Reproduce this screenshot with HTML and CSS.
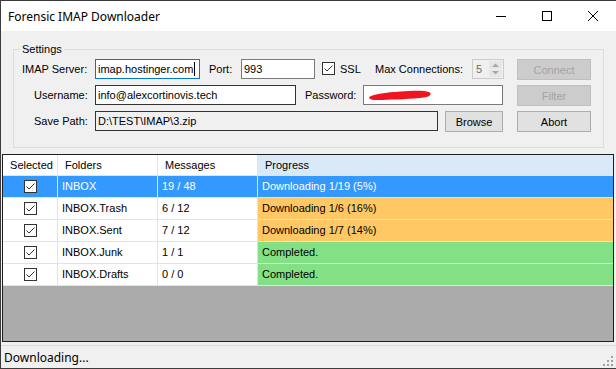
FILE: index.html
```html
<!DOCTYPE html>
<html lang="en">
  <head>
    <meta charset="UTF-8" />
    <title>Forensic IMAP Downloader</title>
    <link rel="stylesheet" href="styles.css">
  </head>
  <body>
    <div class="window">
      <div class="titlebar">
        <span class="title">Forensic IMAP Downloader</span>
        <div class="caption-buttons">
          <span class="cap">
            <svg width="10" height="10" viewBox="0 0 10 10"><path d="M0 5.5H10" stroke="#000" stroke-width="1"/></svg>
          </span>
          <span class="cap">
            <svg width="10" height="10" viewBox="0 0 10 10"><rect x="0.5" y="0.5" width="9" height="9" fill="none" stroke="#000" stroke-width="1"/></svg>
          </span>
          <span class="cap">
            <svg width="10" height="10" viewBox="0 0 10 10"><path d="M0 0L10 10M10 0L0 10" stroke="#000" stroke-width="1"/></svg>
          </span>
        </div>
      </div>

      <div class="main">
        <fieldset class="settings">
          <legend>Settings</legend>
          <div class="row">
            <label class="lbl lbl-server">IMAP Server:</label>
            <div class="textbox tb-server focused">imap.hostinger.com<span class="caret"></span></div>
            <label class="lbl lbl-port">Port:</label>
            <div class="textbox tb-port">993</div>
            <span class="checkbox cb-ssl">
              <svg width="11" height="11" viewBox="0 0 11 11"><path d="M1.5 5.5L4 8L9.5 2.5" fill="none" stroke="#333" stroke-width="1"/></svg>
            </span>
            <label class="lbl lbl-ssl">SSL</label>
            <label class="lbl lbl-max">Max Connections:</label>
            <div class="numeric">
              <span class="num-value">5</span>
              <span class="spin">
                <span class="spin-btn"><svg width="7" height="4" viewBox="0 0 7 4"><path d="M0 4L3.5 0.5L7 4Z" fill="#a8a8a8"/></svg></span>
                <span class="spin-btn"><svg width="7" height="4" viewBox="0 0 7 4"><path d="M0 0L3.5 3.5L7 0Z" fill="#a8a8a8"/></svg></span>
              </span>
            </div>
            <button class="btn btn-side" disabled>Connect</button>
          </div>
          <div class="row">
            <label class="lbl lbl-indent">Username:</label>
            <div class="textbox tb-user dark">info@alexcortinovis.tech</div>
            <label class="lbl lbl-pass">Password:</label>
            <div class="textbox tb-pass">
              <svg class="scribble" width="64" height="12" viewBox="0 0 64 12">
                <path d="M1 8C6 5 18 3.5 32 2.5C44 1.5 56 1 61 3C64 4.5 63 7.5 56 8.5C44 10 26 10.5 14 11C6 11.3 1 11 1 8Z" fill="#f0141e"/>
              </svg>
            </div>
            <button class="btn btn-side" disabled>Filter</button>
          </div>
          <div class="row">
            <label class="lbl lbl-indent">Save Path:</label>
            <div class="textbox tb-path dark readonly">D:\TEST\IMAP\3.zip</div>
            <button class="btn btn-browse">Browse</button>
            <button class="btn btn-side">Abort</button>
          </div>
        </fieldset>

        <div class="grid">
          <div class="grid-row grid-head">
            <div class="cell col-sel">Selected</div>
            <div class="cell col-folder">Folders</div>
            <div class="cell col-msg">Messages</div>
            <div class="cell col-prog sorted">Progress</div>
          </div>
          <div class="grid-row selected">
            <div class="cell col-sel"><span class="checkbox"><svg width="11" height="11" viewBox="0 0 11 11"><path d="M1.5 5.5L4 8L9.5 2.5" fill="none" stroke="#333" stroke-width="1"/></svg></span></div>
            <div class="cell col-folder">INBOX</div>
            <div class="cell col-msg">19 / 48</div>
            <div class="cell col-prog">Downloading 1/19 (5%)</div>
          </div>
          <div class="grid-row">
            <div class="cell col-sel"><span class="checkbox"><svg width="11" height="11" viewBox="0 0 11 11"><path d="M1.5 5.5L4 8L9.5 2.5" fill="none" stroke="#333" stroke-width="1"/></svg></span></div>
            <div class="cell col-folder">INBOX.Trash</div>
            <div class="cell col-msg">6 / 12</div>
            <div class="cell col-prog busy">Downloading 1/6 (16%)</div>
          </div>
          <div class="grid-row">
            <div class="cell col-sel"><span class="checkbox"><svg width="11" height="11" viewBox="0 0 11 11"><path d="M1.5 5.5L4 8L9.5 2.5" fill="none" stroke="#333" stroke-width="1"/></svg></span></div>
            <div class="cell col-folder">INBOX.Sent</div>
            <div class="cell col-msg">7 / 12</div>
            <div class="cell col-prog busy">Downloading 1/7 (14%)</div>
          </div>
          <div class="grid-row">
            <div class="cell col-sel"><span class="checkbox"><svg width="11" height="11" viewBox="0 0 11 11"><path d="M1.5 5.5L4 8L9.5 2.5" fill="none" stroke="#333" stroke-width="1"/></svg></span></div>
            <div class="cell col-folder">INBOX.Junk</div>
            <div class="cell col-msg">1 / 1</div>
            <div class="cell col-prog done">Completed.</div>
          </div>
          <div class="grid-row">
            <div class="cell col-sel"><span class="checkbox"><svg width="11" height="11" viewBox="0 0 11 11"><path d="M1.5 5.5L4 8L9.5 2.5" fill="none" stroke="#333" stroke-width="1"/></svg></span></div>
            <div class="cell col-folder">INBOX.Drafts</div>
            <div class="cell col-msg">0 / 0</div>
            <div class="cell col-prog done">Completed.</div>
          </div>
        </div>

        <div class="status">
          <span class="status-text">Downloading...</span>
          <svg class="grip" width="12" height="12" viewBox="0 0 12 12" fill="#a0a0a0">
            <rect x="9" y="1" width="2" height="2"/>
            <rect x="5" y="5" width="2" height="2"/><rect x="9" y="5" width="2" height="2"/>
            <rect x="1" y="9" width="2" height="2"/><rect x="5" y="9" width="2" height="2"/><rect x="9" y="9" width="2" height="2"/>
          </svg>
        </div>
      </div>
    </div>
  </body>
</html>
```

FILE: styles.css
```css
* {
  box-sizing: border-box;
}
body {
  margin: 0;
  padding: 0;
  background-color: #f0f0f0;
  font-family: "Liberation Sans", Arial, sans-serif;
  font-size: 11px;
  color: #000;
}
.window {
  width: 616px;
  height: 369px;
  display: flex;
  flex-direction: column;
  border-left: 1px solid #3c3c3c;
  border-top: 1px solid #3c3c3c;
  border-bottom: 1px solid #3c3c3c;
  background-color: #f0f0f0;
  overflow: hidden;
}
.titlebar {
  height: 30px;
  flex: none;
  background-color: #fff;
  display: flex;
  align-items: center;
}
.title {
  font-family: "Noto Sans", sans-serif;
  font-size: 12px;
  padding-left: 7px;
  flex: 1;
}
.caption-buttons {
  display: flex;
  height: 100%;
}
.cap {
  width: 46px;
  display: flex;
  align-items: center;
  justify-content: center;
}
.cap svg {
  display: block;
}
.main {
  flex: 1;
  display: flex;
  flex-direction: column;
  padding-top: 12px;
}

/* settings group */
.settings {
  margin: 0 12px 0 12px;
  padding: 0 0 15px 0;
  border: 1px solid #dcdcdc;
  min-width: 0;
}
.settings legend {
  margin-left: 6px;
  padding: 0 2px;
  line-height: 13px;
}
.row {
  display: flex;
  align-items: flex-start;
  height: 21px;
  margin-top: 5px;
}
.row:first-of-type {
  margin-top: 3px;
}
.lbl {
  line-height: 20px;
  white-space: nowrap;
}
.lbl-server {
  margin-left: 8px;
  width: 73px;
}
.lbl-indent {
  margin-left: 20px;
  width: 61px;
}
.lbl-port {
  margin-left: 9px;
  width: 32px;
}
.lbl-ssl {
  margin-left: 5px;
  width: 35px;
}
.lbl-max {
  width: 97px;
}
.lbl-pass {
  margin-left: 9px;
  width: 58px;
}
.textbox {
  height: 20px;
  border: 1px solid #7a7a7a;
  background-color: #fff;
  padding-left: 2px;
  line-height: 18px;
  white-space: nowrap;
  overflow: hidden;
  display: flex;
  align-items: center;
}
.textbox.focused {
  border-color: #0078d7;
}
.textbox.dark {
  border-color: #333;
}
.textbox.readonly {
  background-color: #f0f0f0;
}
.caret {
  display: inline-block;
  width: 1px;
  height: 14px;
  background-color: #000;
  margin-left: 1px;
}
.tb-server {
  width: 105px;
}
.tb-port {
  width: 74px;
}
.tb-user {
  width: 201px;
}
.tb-pass {
  width: 140px;
}
.tb-path {
  width: 343px;
}
.scribble {
  display: block;
  margin-left: 2px;
}
.checkbox {
  width: 13px;
  height: 13px;
  border: 1px solid #333;
  background-color: #fff;
  display: inline-flex;
  flex: none;
}
.checkbox svg {
  display: block;
}
.cb-ssl {
  margin-left: 7px;
  margin-top: 3px;
}
.numeric {
  width: 32px;
  height: 20px;
  border: 1px solid #cccccc;
  background-color: #f0f0f0;
  display: flex;
}
.num-value {
  flex: 1;
  color: #6d6d6d;
  line-height: 18px;
  padding-left: 3px;
}
.spin {
  width: 15px;
  display: flex;
  flex-direction: column;
  padding: 1px;
  gap: 1px;
}
.spin-btn {
  flex: 1;
  background-color: #e6e6e6;
  display: flex;
  align-items: center;
  justify-content: center;
}
.spin-btn svg {
  display: block;
}
.btn {
  height: 21px;
  font-family: "Liberation Sans", Arial, sans-serif;
  font-size: 11px;
  background-color: #e1e1e1;
  border: 1px solid #adadad;
  color: #000;
  padding: 0;
}
.btn:disabled {
  background-color: #cccccc;
  border-color: #bfbfbf;
  color: #a3a3a3;
}
.btn-side {
  width: 74px;
  margin-left: auto;
  margin-right: 12px;
}
.btn-browse {
  width: 58px;
  margin-left: 7px;
}

/* data grid */
.grid {
  flex: 1;
  margin: 6px 2px 0 1px;
  border: 1px solid #1e1e1e;
  background-color: #ababab;
}
.grid-row {
  display: flex;
  height: 22px;
  background-color: #fff;
}
.grid-head {
  height: 21px;
}
.cell {
  border-right: 1px solid #e3e3e3;
  border-bottom: 1px solid #e3e3e3;
  padding-left: 4px;
  line-height: 21px;
  white-space: nowrap;
  overflow: hidden;
}
.grid-head .cell {
  line-height: 20px;
  padding-left: 7px;
}
.col-sel {
  width: 55px;
  display: flex;
  align-items: center;
  justify-content: center;
  padding-left: 0;
}
.grid-head .col-sel {
  padding-left: 3px;
}
.col-folder {
  width: 100px;
}
.col-msg {
  width: 100px;
}
.col-prog {
  flex: 1;
  border-right: none;
}
.col-prog.sorted {
  background-color: #d9e9f8;
}
.col-prog.busy {
  background-color: #ffc864;
}
.col-prog.done {
  background-color: #84e084;
}
.grid-row.selected {
  background-color: #3399ff;
  color: #fff;
}

/* status strip */
.status {
  height: 23px;
  flex: none;
  margin-top: 3px;
  border-top: 1px solid #dadada;
  display: flex;
  align-items: center;
  padding: 0 2px 0 3px;
}
.status-text {
  font-family: "Noto Sans", sans-serif;
  font-size: 12px;
  flex: 1;
}
.grip {
  display: block;
  align-self: flex-end;
  margin-bottom: 1px;
}
```
